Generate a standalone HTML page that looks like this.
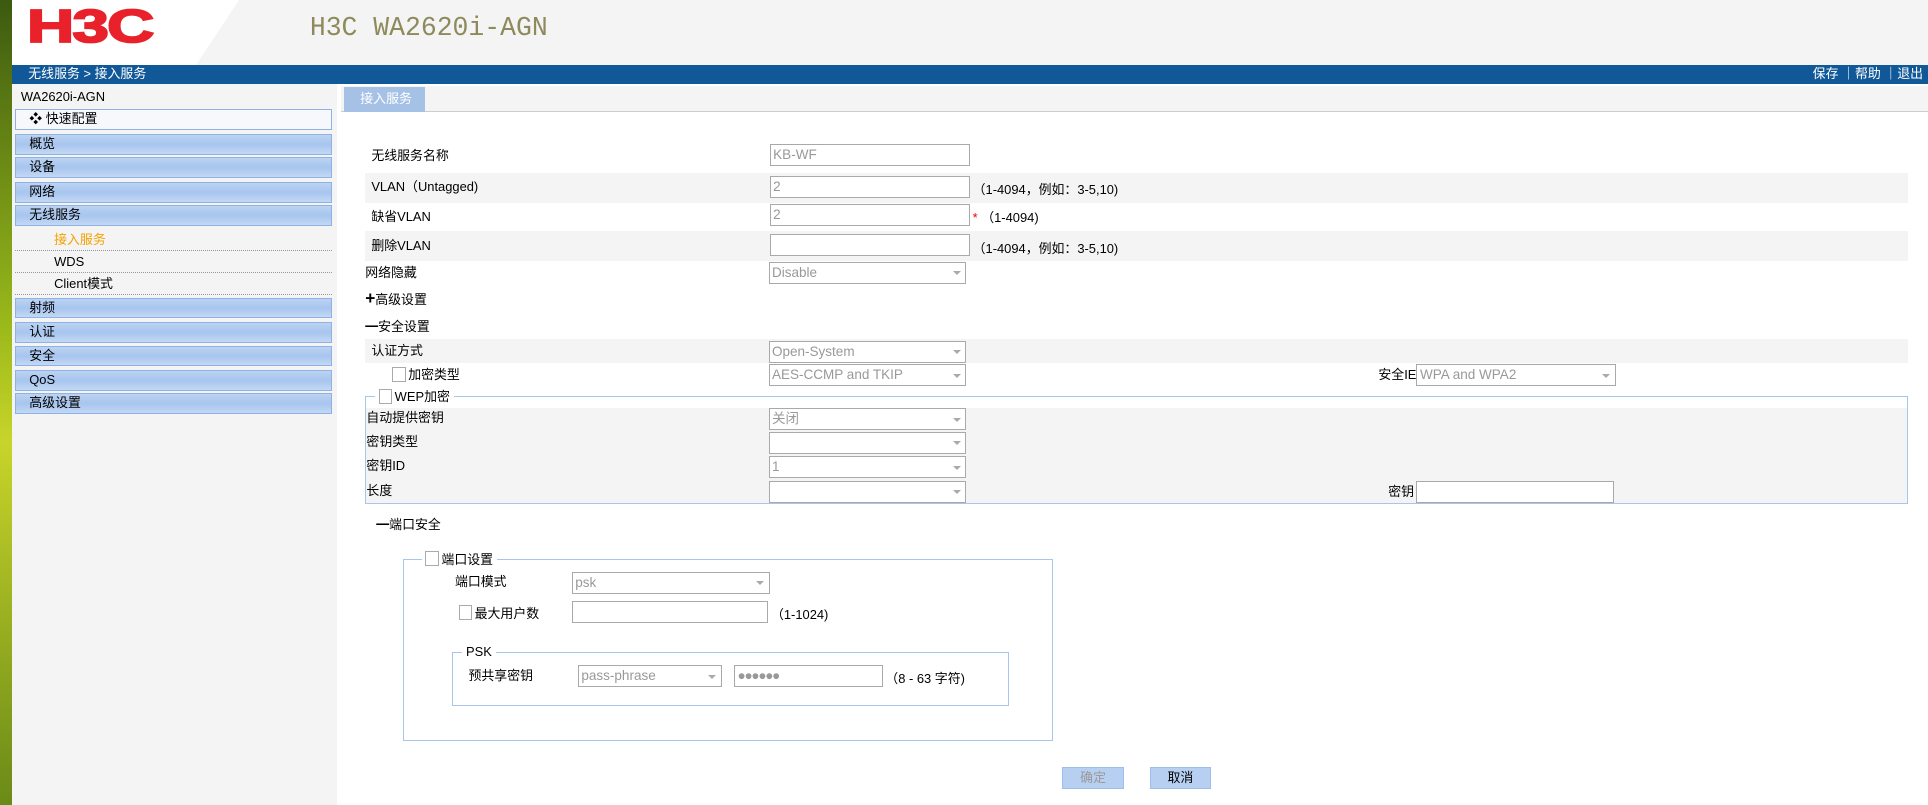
<!DOCTYPE html>
<html><head><meta charset="utf-8"><style>
*{margin:0;padding:0;box-sizing:border-box}
html,body{width:1928px;height:805px;overflow:hidden;background:#fff}
#w{zoom:1.2296;width:1568px;height:655px;position:relative;font-family:"Liberation Sans","Noto Sans CJK SC",sans-serif;font-size:10.5px;color:#000}
.a{position:absolute;white-space:nowrap;line-height:17px}
.inp{position:absolute;height:18px;border:1px solid #a9a9a9;background:#fff;color:#999;font-size:11px;line-height:16px;padding-left:2px}
.sel:after{content:"";position:absolute;right:4px;top:7px;border:3.5px solid transparent;border-top:4px solid #aaa}
.nav{position:absolute;left:12px;width:258px;height:17px;border:1px solid #8db2e3;background:linear-gradient(#bcd3f3,#a7c5ee 50%,#c3d8f5);line-height:15px;padding-left:11px}
.sub{position:absolute;left:12px;width:258px;height:18px;border-bottom:1px dotted #999;line-height:18px;padding-left:32px}
.g{position:absolute;background:#f4f4f4}
.cb{display:inline-block;width:11px;height:12px;border:1px solid #aaa;background:#fff;vertical-align:-2px;margin-right:2px}
.fs{position:absolute;border:1px solid #a8c6ea}
.btn{position:absolute;height:18px;width:50px;background:#b7cff0;border:1px solid #9ebde8;text-align:center;line-height:16px}
</style></head><body><div id="w">
<div class="a" style="left:0;top:0;width:10px;height:655px;background:linear-gradient(#3c5a10,#99b81a 40%,#c8d42a 55%,#6a8a18)"></div>
<div class="a" style="left:10px;top:0;width:1558px;height:53px;background:#f4f4f4"></div>
<div class="a" style="left:10px;top:0;width:0;height:0;border-left:150px solid #fff;border-right:35px solid transparent;border-top:53px solid #fff"></div>
<div class="a" style="left:22px;top:2px;font-size:38px;font-weight:bold;color:#e8212b;letter-spacing:-1px;line-height:40px;transform:scaleX(1.4);transform-origin:left;-webkit-text-stroke:1.5px #e8212b">H3C</div>
<div class="a" style="left:252px;top:9px;font-size:21.5px;color:#8e8a5c;font-family:'Liberation Mono',monospace;line-height:28px">H3C WA2620i-AGN</div>
<div class="a" style="left:10px;top:53px;width:1558px;height:15px;background:#115899;color:#fff;line-height:15px;padding-left:13px">无线服务 &gt; 接入服务</div>
<div class="a" style="right:4px;top:53px;color:#fff;line-height:15px">保存 ｜帮助 ｜退出</div>
<div class="a" style="left:10px;top:68px;width:264px;height:587px;background:#f4f4f4"></div>
<div class="a" style="left:17px;top:71px">WA2620i-AGN</div>
<div class="nav" style="top:89px;background:#f6f8fc">❖ 快速配置</div>
<div class="nav" style="top:109px">概览</div>
<div class="nav" style="top:128px">设备</div>
<div class="nav" style="top:148px">网络</div>
<div class="nav" style="top:167px">无线服务</div>
<div class="sub" style="top:186px;color:#f5a100">接入服务</div>
<div class="sub" style="top:204px">WDS</div>
<div class="sub" style="top:222px">Client模式</div>
<div class="nav" style="top:242px">射频</div>
<div class="nav" style="top:262px">认证</div>
<div class="nav" style="top:281px">安全</div>
<div class="nav" style="top:301px">QoS</div>
<div class="nav" style="top:320px">高级设置</div>
<div class="a" style="left:274px;top:68px;width:3px;height:587px;background:#fff"></div>
<div class="a" style="left:277px;top:70px;width:1291px;height:21px;background:#f4f4f4;border-bottom:1px solid #ccc"></div>
<div class="a" style="left:280px;top:71px;width:66px;height:20px;background:#a6c1e6;color:#fff;line-height:20px;padding-left:13px">接入服务</div>

<div class="a" style="left:302px;top:119px">无线服务名称</div>
<div class="inp" style="left:626px;top:117px;width:163px">KB-WF</div>
<div class="g" style="left:297px;top:141px;width:1255px;height:24px"></div>
<div class="a" style="left:302px;top:144px">VLAN（Untagged)</div>
<div class="inp" style="left:626px;top:143px;width:163px">2</div>
<div class="a" style="left:791px;top:146px">（1-4094，例如：3-5,10)</div>
<div class="a" style="left:302px;top:168px">缺省VLAN</div>
<div class="inp" style="left:626px;top:166px;width:163px">2</div>
<div class="a" style="left:791px;top:169px"><span style="color:#e00">*</span> （1-4094)</div>
<div class="g" style="left:297px;top:188px;width:1255px;height:24px"></div>
<div class="a" style="left:302px;top:192px">删除VLAN</div>
<div class="inp" style="left:626px;top:190px;width:163px"></div>
<div class="a" style="left:791px;top:194px">（1-4094，例如：3-5,10)</div>
<div class="a" style="left:297px;top:214px">网络隐藏</div>
<div class="inp sel" style="left:625px;top:213px;width:161px">Disable</div>
<div class="a" style="left:297px;top:236px"><b style="font-size:14px;line-height:10px">+</b>高级设置</div>
<div class="a" style="left:297px;top:258px"><b>━</b>安全设置</div>
<div class="g" style="left:297px;top:276px;width:1255px;height:19px"></div>
<div class="a" style="left:302px;top:277px">认证方式</div>
<div class="inp sel" style="left:625px;top:277px;width:161px">Open-System</div>
<div class="a" style="left:319px;top:297px"><span class="cb"></span>加密类型</div>
<div class="inp sel" style="left:625px;top:296px;width:161px">AES-CCMP and TKIP</div>
<div class="a" style="left:1121px;top:297px">安全IE</div>
<div class="inp sel" style="left:1152px;top:296px;width:162px">WPA and WPA2</div>
<div class="fs" style="left:297px;top:322px;width:1255px;height:88px"></div>
<div class="a" style="left:305px;top:315px;background:#fff;padding:0 3px"><span class="cb"></span>WEP加密</div>
<div class="g" style="left:298px;top:332px;width:1253px;height:77px"></div>
<div class="a" style="left:298px;top:332px">自动提供密钥</div>
<div class="inp sel" style="left:625px;top:332px;width:161px">关闭</div>
<div class="a" style="left:298px;top:351px">密钥类型</div>
<div class="inp sel" style="left:625px;top:351px;width:161px"></div>
<div class="a" style="left:298px;top:371px">密钥ID</div>
<div class="inp sel" style="left:625px;top:371px;width:161px">1</div>
<div class="a" style="left:298px;top:391px">长度</div>
<div class="inp sel" style="left:625px;top:391px;width:161px"></div>
<div class="a" style="left:1129px;top:392px">密钥</div>
<div class="inp" style="left:1152px;top:391px;width:161px"></div>
<div class="a" style="left:306px;top:419px"><b>━</b>端口安全</div>
<div class="fs" style="left:328px;top:455px;width:528px;height:148px"></div>
<div class="a" style="left:343px;top:447px;background:#fff;padding:0 3px"><span class="cb"></span>端口设置</div>
<div class="a" style="left:370px;top:465px">端口模式</div>
<div class="inp sel" style="left:465px;top:465px;width:161px">psk</div>
<div class="a" style="left:373px;top:491px"><span class="cb"></span>最大用户数</div>
<div class="inp" style="left:465px;top:489px;width:160px"></div>
<div class="a" style="left:627px;top:492px">（1-1024)</div>
<div class="fs" style="left:368px;top:530px;width:453px;height:44px"></div>
<div class="a" style="left:376px;top:522px;background:#fff;padding:0 3px">PSK</div>
<div class="a" style="left:381px;top:542px">预共享密钥</div>
<div class="inp sel" style="left:470px;top:541px;width:117px">pass-phrase</div>
<div class="inp" style="left:597px;top:541px;width:121px;letter-spacing:-1px">●●●●●●</div>
<div class="a" style="left:720px;top:544px">（8 - 63 字符)</div>
<div class="btn" style="left:864px;top:624px;color:#999">确定</div>
<div class="btn" style="left:935px;top:624px">取消</div>
</div></body></html>
